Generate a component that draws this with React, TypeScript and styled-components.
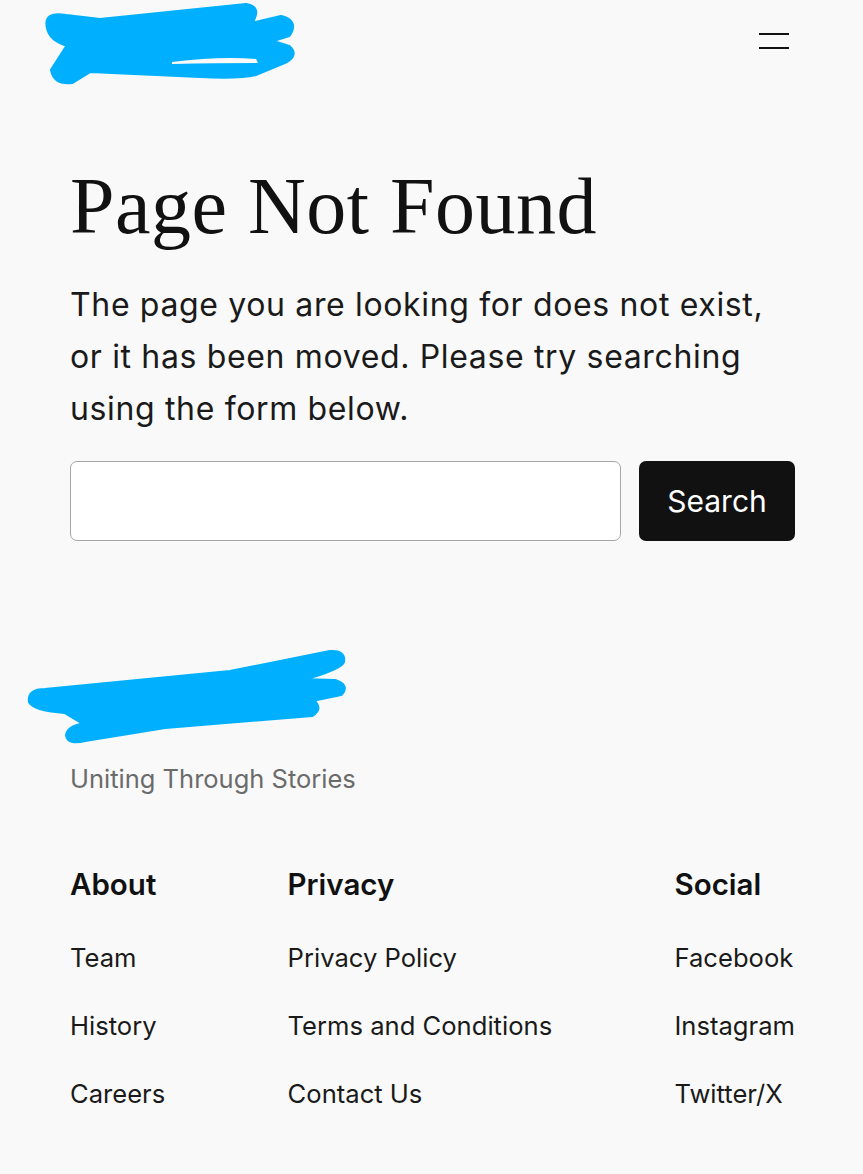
import React from "react";
import styled, { createGlobalStyle } from "styled-components";

const Global = createGlobalStyle`
  html, body { margin: 0; padding: 0; background: #f9f9f9; }
  body { font-family: Inter, "Noto Sans", sans-serif; color: #111111; }
  * { box-sizing: border-box; }
`;

const Page = styled.div`
  width: 863px;
  min-height: 1174px;
  background: #f9f9f9;
  display: flex;
  flex-direction: column;
`;

const Header = styled.header`
  display: flex;
  justify-content: space-between;
  align-items: flex-start;
  height: 80px;
  padding: 0 74px 0 0;
`;

const LogoMark = styled.svg`
  display: block;
  width: 300px;
  height: 85px;
`;

const MenuButton = styled.button`
  margin-top: 33px;
  width: 30px;
  height: 16px;
  padding: 0;
  border: 0;
  background: transparent;
  display: flex;
  flex-direction: column;
  justify-content: space-between;
  cursor: pointer;
`;

const MenuBar = styled.span`
  display: block;
  width: 30px;
  height: 2px;
  background: #111111;
`;

const Main = styled.main`
  padding: 0 68px 0 70px;
  display: flex;
  flex-direction: column;
`;

const Title = styled.h1`
  margin: 82px 0 0;
  font-family: "Liberation Serif", "Times New Roman", serif;
  font-weight: 400;
  font-size: 80px;
  line-height: 88px;
  letter-spacing: 0.5px;
  color: #111111;
`;

const Lead = styled.p`
  margin: 29px 0 0;
  max-width: 712px;
  font-size: 32px;
  line-height: 52px;
  letter-spacing: 0.65px;
  color: #1a1a1a;
`;

const SearchForm = styled.form`
  margin-top: 26px;
  display: flex;
  gap: 18px;
  height: 80px;
`;

const SearchInput = styled.input`
  flex: 1;
  height: 80px;
  border: 1.5px solid #a6a6a6;
  border-radius: 7px;
  background: #ffffff;
  font-family: Inter, sans-serif;
  font-size: 28px;
  padding: 0 20px;
`;

const SearchButton = styled.button`
  width: 156px;
  height: 80px;
  border: 0;
  border-radius: 7px;
  background: #111111;
  color: #ffffff;
  font-family: Inter, sans-serif;
  font-size: 30px;
  font-weight: 400;
  cursor: pointer;
`;

const Footer = styled.footer`
  margin-top: 104px;
  padding: 0 68px 40px 70px;
  display: flex;
  flex-direction: column;
`;

const FooterMark = styled.svg`
  display: block;
  width: 360px;
  height: 102px;
  margin-left: -70px;
`;

const Tagline = styled.p`
  margin: 14px 0 0;
  font-size: 25.5px;
  line-height: 36px;
  color: #6b6b6b;
`;

const Columns = styled.nav`
  margin-top: 69px;
  display: flex;
  justify-content: space-between;
`;

const Column = styled.div`
  display: flex;
  flex-direction: column;
`;

const ColumnTitle = styled.h2`
  margin: 0;
  font-size: 29.5px;
  font-weight: 600;
  line-height: 36px;
  color: #111111;
`;

const LinkList = styled.ul`
  list-style: none;
  margin: 38px 0 0;
  padding: 0;
  display: flex;
  flex-direction: column;
  gap: 32px;
`;

const FooterLink = styled.a`
  display: block;
  font-size: 25.6px;
  line-height: 36px;
  color: #1a1a1a;
  text-decoration: none;
`;

const BLUE = "#00b0ff";

const columns = [
  { title: "About", links: ["Team", "History", "Careers"] },
  { title: "Privacy", links: ["Privacy Policy", "Terms and Conditions", "Contact Us"] },
  { title: "Social", links: ["Facebook", "Instagram", "Twitter/X"] },
];

export default function App() {
  return (
    <Page>
      <Global />
      <Header>
        <LogoMark viewBox="0 0 300 85" aria-hidden="true">
          <path
            d="M 48 28 Q 44 12 66 16 L 100 20 L 246 5 Q 260 7 253 20 L 242 26 L 281 17 Q 298 21 289 35 L 270 41 L 289 47 Q 298 55 285 62 L 256 74 Q 240 78 200 76 L 90 71 L 72 82 Q 55 84 52 70 L 68 45 Q 50 40 48 28 Z"
            fill={BLUE}
            stroke={BLUE}
            strokeWidth="4"
            strokeLinejoin="round"
          />
          <path d="M 172 62 Q 220 56 256 59 L 258 63 Q 220 63 172 64 Z" fill="#f9f9f9" />
        </LogoMark>
        <MenuButton aria-label="Open menu" type="button">
          <MenuBar />
          <MenuBar />
        </MenuButton>
      </Header>

      <Main>
        <Title>Page Not Found</Title>
        <Lead>
          The page you are looking for does not exist, or it has been moved. Please try searching using the form below.
        </Lead>
        <SearchForm onSubmit={(e) => e.preventDefault()}>
          <SearchInput type="search" aria-label="Search" />
          <SearchButton type="submit">Search</SearchButton>
        </SearchForm>
      </Main>

      <Footer>
        <FooterMark viewBox="0 0 360 102" aria-hidden="true">
          <path
            d="M 30 57 Q 28 45 45 45 L 230 27 L 330 7 Q 345 6 343 17 Q 340 24 300 35 L 335 36 Q 349 41 341 49 L 312 55 Q 323 63 312 70 L 165 82 L 85 95 Q 68 99 67 90 Q 68 82 85 79 L 65 67 Q 35 65 30 57 Z"
            fill={BLUE}
            stroke={BLUE}
            strokeWidth="4"
            strokeLinejoin="round"
          />
        </FooterMark>
        <Tagline>Uniting Through Stories</Tagline>
        <Columns>
          {columns.map((col) => (
            <Column key={col.title}>
              <ColumnTitle>{col.title}</ColumnTitle>
              <LinkList>
                {col.links.map((l) => (
                  <li key={l}>
                    <FooterLink href="#">{l}</FooterLink>
                  </li>
                ))}
              </LinkList>
            </Column>
          ))}
        </Columns>
      </Footer>
    </Page>
  );
}
